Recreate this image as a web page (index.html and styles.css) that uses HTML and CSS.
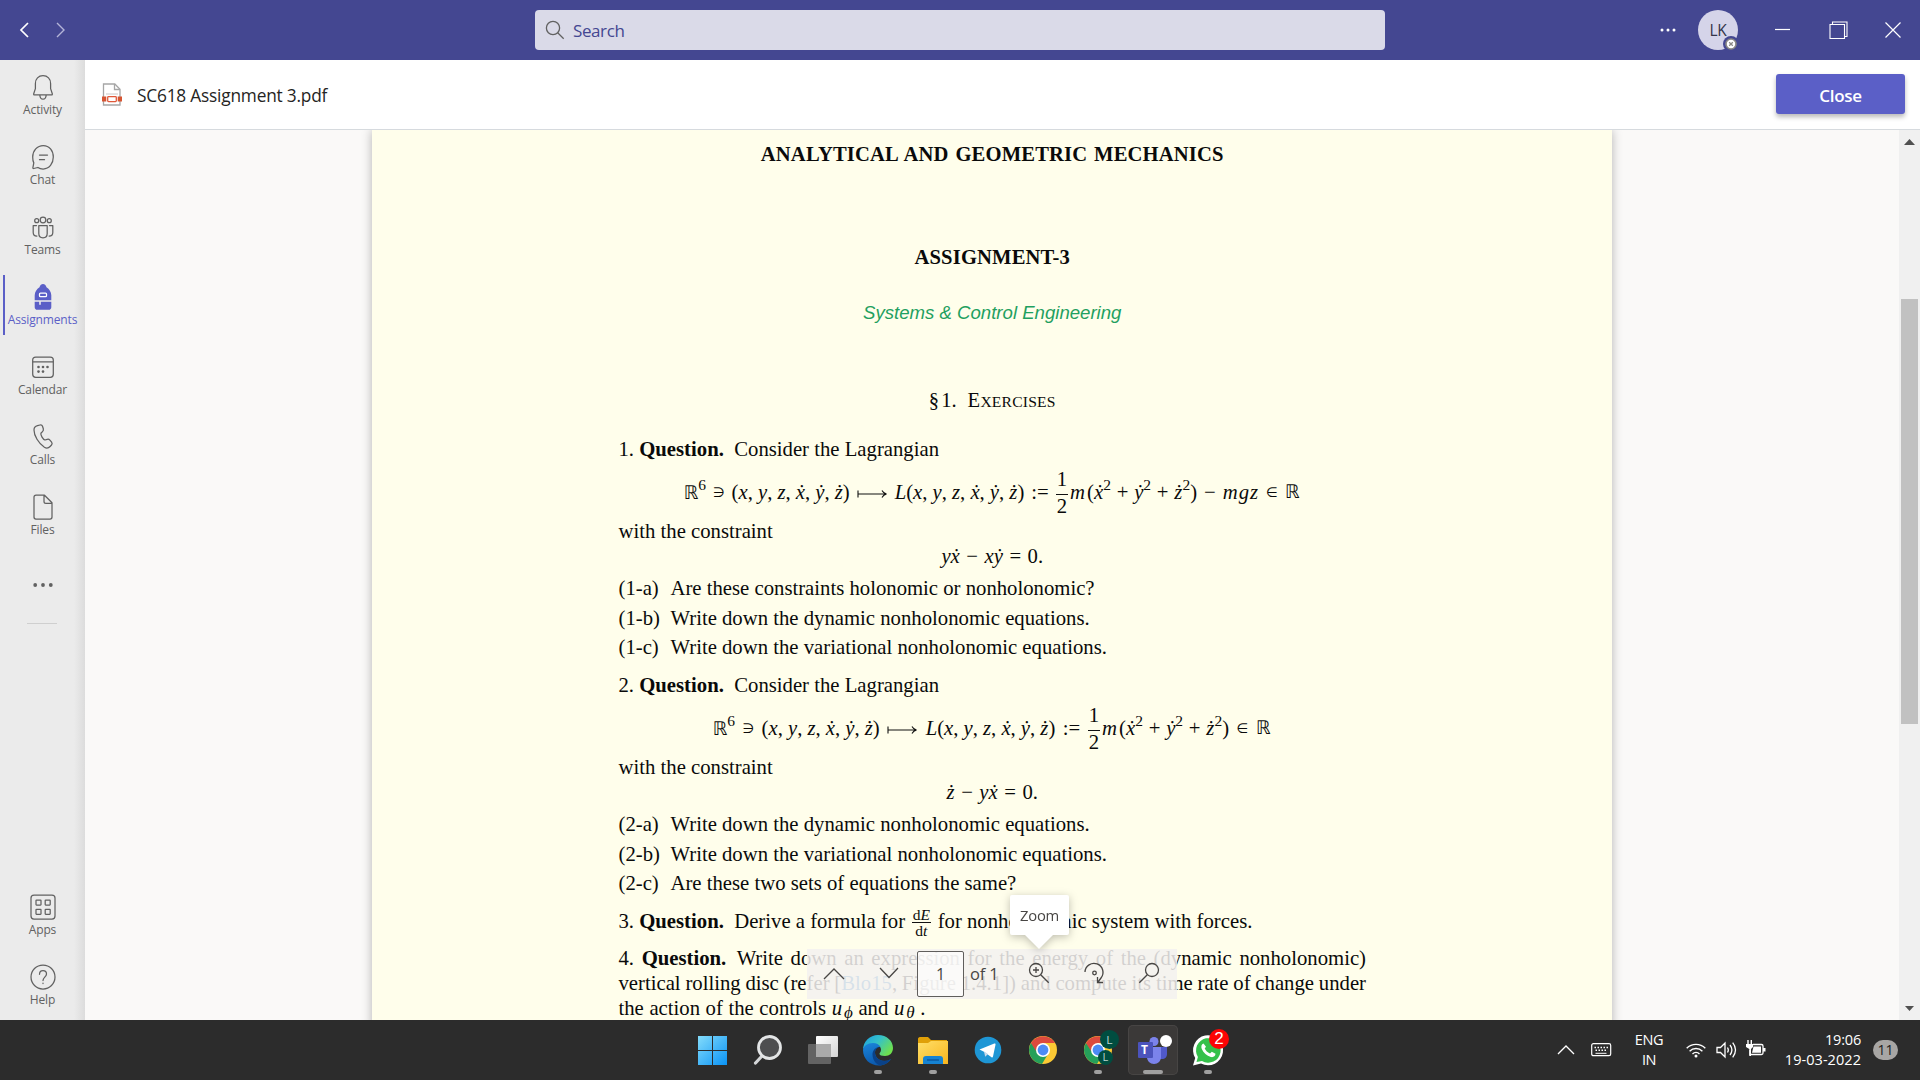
FILE: index.html
```html
<!DOCTYPE html>
<html lang="en">
<head>
<meta charset="utf-8">
<title>SC618 Assignment 3.pdf</title>
<link rel="stylesheet" href="styles.css">
</head>
<body>
<div class="desktop">
  <header class="titlebar">
    <div class="history">
      <svg width="12" height="18" viewBox="0 0 12 18"><path d="M10 2 3 9l7 7" fill="none" stroke="#fff" stroke-width="1.7"/></svg>
      <svg width="12" height="18" viewBox="0 0 12 18"><path d="m2 2 7 7-7 7" fill="none" stroke="#b4b5d8" stroke-width="1.4"/></svg>
    </div>
    <div class="searchbox">
      <svg width="20" height="20" viewBox="0 0 20 20" fill="none" stroke="#616161" stroke-width="1.3"><circle cx="8" cy="8" r="6.6"/><path d="m12.7 12.7 6 6"/></svg>
      <span>Search</span>
    </div>
    <div class="window-tools">
      <svg class="dots" width="18" height="4" viewBox="0 0 18 4" fill="#fff"><circle cx="3" cy="2" r="1.5"/><circle cx="9" cy="2" r="1.5"/><circle cx="15" cy="2" r="1.5"/></svg>
      <div class="avatar">LK
        <svg class="presence" width="16" height="16" viewBox="0 0 16 16"><circle cx="8" cy="8" r="8" fill="#444791"/><circle cx="8" cy="8" r="5" fill="#fff" stroke="#8a8886" stroke-width="1.6"/><path d="m6.2 6.2 3.6 3.6m0-3.6-3.6 3.6" stroke="#8a8886" stroke-width="1.3"/></svg>
      </div>
      <svg class="minimize" width="16" height="18" viewBox="0 0 16 18"><path d="M0 8.5h15" stroke="#fff" stroke-width="1.2"/></svg>
      <svg class="restore" width="19" height="19" viewBox="0 0 19 19" fill="none" stroke="#fff" stroke-width="1.1"><path d="M1 3.5h14.5v14H1zM3.5 3.5V1H18v14.500h-2.500"/></svg>
      <svg class="quit" width="16" height="16" viewBox="0 0 16 16"><path d="m.5.5 15 15m0-15-15 15" stroke="#fff" stroke-width="1.2"/></svg>
    </div>
  </header>

  <div class="app">
    <nav class="rail">
      <a class="item"><svg viewBox="0 0 28 28"><path d="M14 2.700c-4.600 0-7.600 3.300-7.600 7.700v5.200l-1.700 5.200c-.2.600.1 1 .7 1h17.200c.6 0 .9-.4.700-1l-1.700-5.200v-5.200c0-4.400-3-7.700-7.600-7.700zM10.800 22c.2 3 1.500 4.200 3.200 4.200s3-1.200 3.200-4.200"/></svg>Activity</a>
      <a class="item"><svg viewBox="0 0 28 28"><path d="M14.300 2.500c6 0 10 5 10 11.500s-4 12-10.200 12c-2 0-3.700-.5-5.200-1.500l-4.200 1c-.6.1-.9-.2-.8-.8l.9-4.800C3.900 18.200 3.700 16.200 3.700 14c0-6.500 4.500-11.500 10.600-11.500zM10.500 12h8M10.500 16.700h5"/></svg>Chat</a>
      <a class="item"><svg viewBox="0 0 28 28"><circle cx="14" cy="7" r="2.800"/><circle cx="7.700" cy="7.700" r="2"/><circle cx="20.300" cy="7.700" r="2"/><path d="M9.800 12.500h8.400v8c0 2.600-1.700 4.300-4.200 4.300s-4.200-1.700-4.200-4.300zM7.500 12.500H4.200v7c0 2.300 1.300 3.600 3.700 3.600M20.500 12.500h3.300v7c0 2.300-1.300 3.600-3.700 3.600"/></svg>Teams</a>
      <a class="item active"><svg viewBox="0 0 28 28"><path class="solid" d="M14 1c1.500 0 2.800 1.200 3.500 3.200 2.900 1.800 4.600 4.600 4.800 8v5H5.700v-5c.2-3.400 1.900-6.200 4.800-8C11.200 2.200 12.500 1 14 1zM5.700 18.800h4.500v3h1.600v-3h10.500v5.400c0 1.500-1 2.600-2.500 2.600H8.200c-1.500 0-2.500-1.100-2.500-2.600z"/><rect x="10.500" y="10" width="7" height="3.700" rx="1" stroke="#fff"/></svg>Assignments</a>
      <a class="item"><svg viewBox="0 0 28 28"><rect x="3.700" y="4" width="20.600" height="20.300" rx="3"/><path d="M4 8.800h20"/><g class="solid"><circle cx="9.500" cy="14" r="1.300"/><circle cx="14" cy="14" r="1.300"/><circle cx="18.500" cy="14" r="1.300"/><circle cx="9.500" cy="18.600" r="1.300"/><circle cx="14" cy="18.600" r="1.300"/></g></svg>Calendar</a>
      <a class="item"><svg viewBox="0 0 28 28"><path d="M8.500 2.700 11 2c1.200-.3 2.100.2 2.500 1.300l.8 2.500c.3 1.200 0 2-.8 2.800l-1.600 1.700c-.5 1.700 2.200 6.300 4 6.700l2.300-.7c1-.3 2 0 2.700.8l1.700 2.100c.7 1 .7 2-.1 2.800l-1.400 1.500c-1.600 1.700-3.700 2-5.700.8C9.500 20.300 5 12.700 5 6.900c0-2 1.400-3.600 3.500-4.200z"/></svg>Calls</a>
      <a class="item"><svg viewBox="0 0 28 28"><path d="M7 2.200h8.500L23 9.700V24c0 1.300-.7 2-2 2H7c-1.300 0-2-.7-2-2V4.200c0-1.300.7-2 2-2zM15 2.500v6c0 1.300.6 1.900 1.900 1.900H23"/></svg>Files</a>
      <a class="item more"><svg viewBox="0 0 28 28"><g class="solid"><circle cx="6.200" cy="14" r="1.900"/><circle cx="14" cy="14" r="1.900"/><circle cx="21.800" cy="14" r="1.900"/></g></svg></a>
      <div class="rule"></div>
      <a class="item apps"><svg viewBox="0 0 28 28"><rect x="2" y="2" width="24" height="24" rx="3"/><rect x="7" y="7" width="5" height="5" rx=".5"/><rect x="16.200" y="7" width="5" height="5" rx=".5"/><rect x="7" y="16.300" width="5" height="5" rx=".5"/><rect x="16.200" y="16.300" width="5" height="5" rx=".5"/></svg>Apps</a>
      <a class="item"><svg viewBox="0 0 28 28"><circle cx="14" cy="14" r="12"/><path d="M10.500 11.300c0-2.300 1.300-3.800 3.500-3.800s3.500 1.400 3.500 3.400c0 3-3.500 3.500-3.500 6.600M14 20v.6"/></svg>Help</a>
    </nav>

    <main class="viewer">
      <div class="filebar">
        <svg class="pdf" width="20" height="23" viewBox="0 0 20 23"><path d="M1.500 1h11.300L18 6.200V22H1.500z" fill="#fff" stroke="#a6a6a6" stroke-width="1.300"/><path d="M12.500 1v5.500H18" fill="none" stroke="#a6a6a6" stroke-width="1.300"/><path d="M4 11h12" stroke="#c8c8c8"/><path d="M0 13.500h20v5H0z" fill="#d65532"/><rect x="4.300" y="12.500" width="11.400" height="7" fill="#fff"/><rect x="5.700" y="13.600" width="8.600" height="5" rx=".8" fill="#fff" stroke="#e0593a" stroke-width="1.300"/></svg>
        <span class="filename">SC618 Assignment 3.pdf</span>
        <button class="close">Close</button>
      </div>
      <div class="stage">
        <article class="paper">
          <h1 class="line course">ANALYTICAL AND GEOMETRIC MECHANICS</h1>
          <h2 class="line number">ASSIGNMENT-3</h2>
          <p class="line dept">Systems &amp; Control Engineering</p>
          <h3 class="line section">§<span>1.</span><span class="caps">E<small>XERCISES</small></span></h3>

          <p class="line q1">1. <b>Question.</b>&ensp;Consider the Lagrangian</p>
          <div class="line formula f1">
            <span><span class="bb">ℝ</span><sup>6</sup></span><span class="rel">∋</span><span class="tuple">(<i>x</i>, <i>y</i>, <i>z</i>, <i>ẋ</i>, <i>ẏ</i>, <i>ż</i>)</span>
            <svg class="maps" width="31" height="10" viewBox="0 0 31 10"><path d="M1 1.500v7M1 5h28M25 1.500c1 2 2.300 3 4.500 3.500-2.200.5-3.500 1.500-4.500 3.500" fill="none" stroke="#111" stroke-width="1.100"/></svg>
            <span class="tuple"><i>L</i>(<i>x</i>, <i>y</i>, <i>z</i>, <i>ẋ</i>, <i>ẏ</i>, <i>ż</i>)</span><span class="def">:=</span>
            <span class="half"><span class="frac"><span>1</span><span>2</span></span><span class="kinetic"><i class="mass">m</i>(<i>ẋ</i><sup>2</sup> + <i>ẏ</i><sup>2</sup> + <i>ż</i><sup>2</sup>)</span></span><span>−</span><span class="mgz">mgz</span><span class="rel">∈</span><span class="bb">ℝ</span>
          </div>
          <p class="line with1">with the constraint</p>
          <div class="line eq e1"><i>yẋ</i><span>−</span><i>xẏ</i><span>=</span>0.</div>
          <p class="line item-1a"><span class="tag">(1-a)</span>Are these constraints holonomic or nonholonomic?</p>
          <p class="line item-1b"><span class="tag">(1-b)</span>Write down the dynamic nonholonomic equations.</p>
          <p class="line item-1c"><span class="tag">(1-c)</span>Write down the variational nonholonomic equations.</p>

          <p class="line q2">2. <b>Question.</b>&ensp;Consider the Lagrangian</p>
          <div class="line formula f2">
            <span><span class="bb">ℝ</span><sup>6</sup></span><span class="rel">∋</span><span class="tuple">(<i>x</i>, <i>y</i>, <i>z</i>, <i>ẋ</i>, <i>ẏ</i>, <i>ż</i>)</span>
            <svg class="maps" width="31" height="10" viewBox="0 0 31 10"><path d="M1 1.500v7M1 5h28M25 1.500c1 2 2.300 3 4.500 3.500-2.200.5-3.500 1.500-4.500 3.500" fill="none" stroke="#111" stroke-width="1.100"/></svg>
            <span class="tuple"><i>L</i>(<i>x</i>, <i>y</i>, <i>z</i>, <i>ẋ</i>, <i>ẏ</i>, <i>ż</i>)</span><span class="def">:=</span>
            <span class="half"><span class="frac"><span>1</span><span>2</span></span><span class="kinetic"><i class="mass">m</i>(<i>ẋ</i><sup>2</sup> + <i>ẏ</i><sup>2</sup> + <i>ż</i><sup>2</sup>)</span></span><span class="rel">∈</span><span class="bb">ℝ</span>
          </div>
          <p class="line with2">with the constraint</p>
          <div class="line eq e2"><i>ż</i><span>−</span><i>yẋ</i><span>=</span>0.</div>
          <p class="line item-2a"><span class="tag">(2-a)</span>Write down the dynamic nonholonomic equations.</p>
          <p class="line item-2b"><span class="tag">(2-b)</span>Write down the variational nonholonomic equations.</p>
          <p class="line item-2c"><span class="tag">(2-c)</span>Are these two sets of equations the same?</p>

          <p class="line q3">3. <b>Question.</b>&ensp;Derive a formula for <span class="frac small"><span>d<i>E</i></span><span>d<i>t</i></span></span> for nonholonomic system with forces.</p>
          <p class="line q4 full">4. <b>Question.</b>&ensp;Write down an expression for the energy of the (dynamic nonholonomic)</p>
          <p class="line q4b full">vertical rolling disc (refer [<span class="cite">Blo15</span>, Figure 1.4.1]) and compute its time rate of change under</p>
          <p class="line q4c">the action of the controls <i>u<sub>ϕ</sub></i> and <i>u<sub>θ</sub></i> .</p>
        </article>

        <div class="scrollbar">
          <svg width="11" height="6" viewBox="0 0 11 6"><path d="M5.500 0 11 6H0z" fill="#505050"/></svg>
          <div class="thumb"></div>
          <svg width="9" height="5" viewBox="0 0 9 5"><path d="M0 0h9L4.500 5z" fill="#505050"/></svg>
        </div>

        <div class="tooltip">Zoom</div>
        <div class="pager">
          <svg class="up" width="22" height="13" viewBox="0 0 22 13"><path d="m1 12 10-10 10 10"/></svg>
          <svg class="down" width="20" height="13" viewBox="0 0 20 13"><path d="m1 1 9 9.500L19 1"/></svg>
          <span class="pageno">1</span>
          <span class="of">of 1</span>
          <svg class="zoomin" width="22" height="22" viewBox="0 0 22 22"><circle cx="8" cy="8" r="6.500"/><path d="m12.700 12.700 8 8M8 5v6M5 8h6"/></svg>
          <svg class="rotate" width="24" height="24" viewBox="0 0 24 24"><path d="M2 11a9 9 0 1 1 16 6l-3 4M14.500 16v5.500H20"/><circle cx="11.500" cy="12" r="1.800"/></svg>
          <svg class="find" width="22" height="22" viewBox="0 0 22 22"><circle cx="14" cy="8" r="6.500"/><path d="m9.300 12.700-8 8"/></svg>
        </div>
      </div>
    </main>
  </div>

  <footer class="taskbar">
    <div class="pins">
      <div class="pin"><svg viewBox="0 0 32 32"><defs><linearGradient id="win" x1="0" y1="0" x2="1" y2="1"><stop offset="0" stop-color="#84dcfb"/><stop offset="1" stop-color="#0a93f5"/></linearGradient></defs><path fill="url(#win)" d="M1 2h14v14H1zM16 2h14v14H16zM1 17h14v14H1zM16 17h14v14H16z"/></svg></div>
      <div class="pin"><svg viewBox="0 0 32 32"><path d="m10.500 21.500-7 7.500" stroke="#d4d6d8" stroke-width="3.200" stroke-linecap="round"/><circle cx="17.500" cy="13.500" r="11" fill="#4d4e50" stroke="#e3e5e6" stroke-width="2.800"/></svg></div>
      <div class="pin"><svg viewBox="0 0 32 32"><defs><linearGradient id="tv" x1="0" y1="0" x2="1" y2="1"><stop offset="0" stop-color="#fff"/><stop offset="1" stop-color="#d4d4d4"/></linearGradient></defs><rect x="9" y="2" width="22" height="21" rx="1" fill="url(#tv)"/><rect x="1" y="10" width="23" height="20" rx="1" fill="#6b6b6b" opacity=".88"/><path d="M9 10h15v13H9z" fill="#aaa"/></svg></div>
      <div class="pin run"><svg viewBox="0 0 32 32"><defs><linearGradient id="eg" x1="0" y1="0" x2="1" y2=".6"><stop offset="0" stop-color="#1b9de2"/><stop offset=".5" stop-color="#35c1c9"/><stop offset="1" stop-color="#6ee04e"/></linearGradient><linearGradient id="eb" x1="0" y1="0" x2=".4" y2="1"><stop offset="0" stop-color="#1b86dc"/><stop offset="1" stop-color="#0b58ac"/></linearGradient></defs><path fill="url(#eg)" d="M1 16C1 7.500 8 1 16 1c9 0 15 6 15 13 0 5-3.500 8-8 8-3.500 0-5.500-1-5.500-2.300 0-1 1.500-1.600 1.500-4 0-3-3-5.700-7.500-5.700C6 10 1.500 13 1 16z"/><path fill="url(#eb)" d="M1 16c.5-4 4.500-7 10-7 3.500 0 6 1.500 7.500 4-3-.5-5.500 2-5.500 5.500 0 4.500 4 8.500 9.500 8.500 2.500 0 5-.8 6.500-2-2.500 4-7 6.500-12 6.500C8 31.500 1 25 1 16z"/><path fill="#0a4289" d="M18.500 13c-4-.5-8 2.500-8 7.500s3 9.500 7.500 11c4.500-.5 8.500-2.700 11-6.500-8 4.500-16 0-16-6.500 0-3 2.500-5.500 5.500-5.500z"/></svg></div>
      <div class="pin run"><svg viewBox="0 0 32 32"><defs><linearGradient id="fo" x1="0" y1="0" x2="1" y2="1"><stop offset="0" stop-color="#ffdf68"/><stop offset="1" stop-color="#f8b51e"/></linearGradient></defs><path d="M1 5c0-1 .7-2 2-2h8l3 3h16v8H1z" fill="#e0a008"/><path d="M1 9h10l3-2h17v23H1z" fill="url(#fo)"/><path d="M6 30v-5c0-2 1-3 3-3h14c2 0 3 1 3 3v5z" fill="#1683d2"/><path d="M10 26h12" stroke="#0a529a" stroke-width="1.300"/></svg></div>
      <div class="pin"><svg viewBox="0 0 32 32"><circle cx="16" cy="16" r="13.300" fill="#1e96d5"/><path d="m7.500 15.500 14.800-6c.8-.3 1.400.2 1.200 1.200l-2.500 11.800c-.2.900-.8 1.100-1.500.7L12 17.700z" fill="#fff"/><path d="m12 17.500 1.200 5.200 2.800-2.700" fill="#c8daea"/></svg></div>
      <div class="pin"><svg viewBox="0 0 32 32"><circle cx="16" cy="16" r="14" fill="#fbc934"/><path d="M16 16 3.900 9A14 14 0 0 0 15 30l6-10z" fill="#25a05a"/><path d="M16 9h12.100A14 14 0 0 0 4 9l5 8z" fill="#dc4a3e"/><circle cx="16" cy="16" r="7" fill="#fff"/><circle cx="16" cy="16" r="5.400" fill="#4c8bf5"/></svg></div>
      <div class="pin run"><svg viewBox="0 0 32 32"><circle cx="16" cy="16" r="14" fill="#fbc934"/><path d="M16 16 3.900 9A14 14 0 0 0 15 30l6-10z" fill="#25a05a"/><path d="M16 9h12.100A14 14 0 0 0 4 9l5 8z" fill="#dc4a3e"/><circle cx="16" cy="16" r="7" fill="#fff"/><circle cx="16" cy="16" r="5.400" fill="#4c8bf5"/></svg><span class="profile big">L</span><span class="profile little">L</span></div>
      <div class="pin run current"><svg viewBox="0 0 32 32"><circle cx="17" cy="7.500" r="4.500" fill="#7b83eb"/><path d="M21 13h9v7c0 3-2 5-5 5h-4z" fill="#5059c9"/><path d="M10 13h14v10c0 4-3 7-7 7s-7-3-7-7z" fill="#7b83eb"/><rect x="1" y="8" width="15" height="16" rx="1" fill="#4b53bc"/><circle cx="29" cy="7" r="6" fill="#fff"/></svg><span class="tee">T</span></div>
      <div class="pin run"><svg viewBox="0 0 32 32"><path d="M1 31.500 3.200 24A15 15 0 1 1 9 29.500z" fill="#fff"/><path d="m4.500 28 1.400-5A12.300 12.300 0 1 1 10 27z" fill="#35c14b"/><path d="M11.500 9.500c-2 .8-2.700 3-1.700 5.500 1.700 4 5 6.800 9 8 2.500.6 4.500-.7 4.700-3.200l-3.700-2-1.800 1.800c-2.500-1-4.200-2.700-5.300-5l1.300-1.800z" fill="#fff"/></svg><span class="unread">2</span></div>
    </div>
    <div class="tray">
      <svg class="expand" width="18" height="10" viewBox="0 0 18 10"><path d="m1 9 8-8 8 8" fill="none" stroke="#fff" stroke-width="1.300"/></svg>
      <svg class="keys" width="21" height="14" viewBox="0 0 21 14"><rect x=".7" y=".7" width="19" height="12" rx="1.700" fill="none" stroke="#fff" stroke-width="1.200"/><path d="M3.500 4.500h14M4.500 7.300h12" stroke="#fff" stroke-width="1.500" stroke-dasharray="1.500 1.500"/><path d="M4.500 10.300h11" stroke="#fff"/></svg>
      <div class="lang"><span>ENG</span><span>IN</span></div>
      <svg class="wifi" width="20" height="16" viewBox="0 0 20 16" fill="none" stroke="#fff" stroke-width="1.400"><path d="M.7 6.300a13 13 0 0 1 18.600 0M3.600 9.200a9 9 0 0 1 12.800 0M6.500 12a5 5 0 0 1 7 0"/><circle cx="10" cy="14" r="1.500" fill="#fff" stroke="none"/></svg>
      <svg class="sound" width="21" height="18" viewBox="0 0 21 18" fill="none" stroke="#fff" stroke-width="1.300"><path d="M1 6.500h3.500L9 2v14l-4.500-4.500H1zM11.500 6.500c1 1.500 1 3.500 0 5M14 4c2.300 3 2.300 7 0 10M16.700 1.700c3.500 4.500 3.500 10 0 14.600"/></svg>
      <svg class="battery" width="20" height="17" viewBox="0 0 20 17"><path d="M7 4.500h8.500c1 0 1.500.5 1.500 1.500v7c0 1-.5 1.500-1.500 1.500H4V10" fill="none" stroke="#fff" stroke-width="1.300"/><path d="M7.500 6.500H15v6.200H6zM17 8h2.500v3.500H17zM0 4h7v3L5 9v7H3.300V9L0 7zM1.300 0h1.400v4H1.300zM4.600 0H6v4H4.600z" fill="#fff"/></svg>
      <div class="clock"><span>19:06</span><span class="date">19-03-2022</span></div>
      <span class="count">11</span>
    </div>
  </footer>
</div>
</body>
</html>
```
FILE: styles.css
```css
* { box-sizing: border-box; }
body { margin: 0; font-family: "Open Sans", "Noto Sans", sans-serif; }
h1, h2, h3, p { margin: 0; font-weight: 400; }
svg { display: block; flex: none; overflow: visible; }

.desktop { width: 1920px; height: 1080px; display: flex; flex-direction: column; overflow: hidden; }

/* title bar */
.titlebar { height: 60px; background: #444791; display: flex; align-items: center; flex: none; }
.history { width: 535px; display: flex; gap: 25px; padding-left: 18px; }
.searchbox { width: 850px; height: 40px; border-radius: 4px; background: #dadae8; display: flex; align-items: center; gap: 8px; padding-left: 10px; color: #444791; font-size: 17px; letter-spacing: -.4px; }
.window-tools { flex: 1; display: flex; align-items: center; padding-left: 274px; }
.avatar { position: relative; width: 40px; height: 40px; margin-left: 21px; border-radius: 50%; background: #d5d4e9; color: #33344a; font-size: 15.500px; font-weight: 500; line-height: 40px; text-align: center; letter-spacing: -.3px; }
.presence { position: absolute; right: -1px; bottom: -2px; }
.minimize { margin-left: 37px; }
.restore { margin-left: 38px; }
.quit { margin-left: 37px; }

/* app rail */
.app { flex: 1; display: flex; min-height: 0; }
.rail { width: 85px; flex: none; display: flex; flex-direction: column; background: linear-gradient(90deg, #ebebeb 74px, #dcdcdc 85px); }
.item { height: 70px; flex: none; display: flex; flex-direction: column; align-items: center; padding-top: 13px; font-size: 12px; line-height: 17px; letter-spacing: -.15px; color: #616161; }
.item svg { width: 28px; height: 28px; margin-left: 1px; fill: none; stroke: #616161; stroke-width: 1.25; stroke-linecap: round; stroke-linejoin: round; }
.item .solid { fill: #616161; stroke: none; }
.item.active { color: #5b5fc7; background: linear-gradient(#5b5fc7, #5b5fc7) 3px 5px / 2px 60px no-repeat; }
.item.active .solid { fill: #5b5fc7; }
.item.more { padding-top: 21px; }
.rule { width: 30px; height: 1px; margin: 3px 0 0 27px; background: #cfcfcf; }
.item.apps { margin-top: auto; }

/* file header */
.viewer { flex: 1; display: flex; flex-direction: column; min-width: 0; }
.filebar { height: 70px; flex: none; display: flex; align-items: center; background: #fff; border-bottom: 1px solid #d6dade; padding: 0 15px 0 17px; }
.filename { flex: 1; margin: 2px 0 0 15px; font-size: 17.300px; letter-spacing: -.2px; color: #252423; font-weight: 500; }
.close { width: 129px; height: 40px; margin-bottom: 1px; border: 0; border-radius: 3px; background: #5b5fc7; color: #fff; font: 600 17px "Open Sans", sans-serif; letter-spacing: -.3px; padding-top: 3px; box-shadow: 0 3px 5px rgba(0,0,0,.28); }

/* document stage */
.stage { flex: 1; min-height: 0; display: flex; justify-content: space-between; position: relative; overflow: hidden; background: #faf9f8; padding-left: 287px; }
.paper { width: 1240px; height: 900px; background: #fffeeb; box-shadow: 0 0 10px rgba(0,0,0,.28); padding: 12px 246px 0 246.500px; color: #0a0a0a; font-family: "Liberation Serif", serif; font-size: 20.720px; }
.line { line-height: 24px; white-space: nowrap; }
.course { height: 103px; font-size: 20.600px; font-weight: 700; text-align: center; letter-spacing: .160px; word-spacing: 1.500px; font-kerning: normal; }
.number { height: 56px; font-size: 20.600px; font-weight: 700; text-align: center; letter-spacing: .15px; }
.dept { height: 87px; text-align: center; font: italic 18.600px/24px "Liberation Sans", sans-serif; color: #1fa060; }
.section { height: 49px; display: flex; justify-content: center; gap: 2px; font-size: 20.600px; }
.caps { margin-left: 9px; letter-spacing: .2px; }
.caps small { font-size: 15.600px; }
.q1 { height: 43px; }
.f1 { height: 39px; width: 616px; margin-left: 65px; }
.with1 { height: 25px; }
.e1 { height: 32px; }
.item-1a { height: 30px; }
.item-1b { height: 29px; }
.item-1c { height: 38px; }
.q2 { height: 43px; }
.f2 { height: 39px; width: 558px; margin-left: 94px; }
.with2 { height: 25px; }
.e2 { height: 32px; }
.item-2a { height: 30px; }
.item-2b { height: 29px; }
.item-2c { height: 38px; }
.q3 { height: 37px; }
.q4, .q4b { height: 25px; }
.q4c { word-spacing: .400px; }
.full { text-align: justify; text-align-last: justify; word-spacing: -1.500px; }
.cite { color: #2a7fc0; }
.tag { display: inline-block; width: 52px; }
.formula { display: flex; justify-content: space-between; }
.tuple { word-spacing: -.1px; }
.bb { font-family: "DejaVu Sans", sans-serif; font-size: 18.500px; }
.rel { font-family: "DejaVu Sans", sans-serif; font-size: 13.500px; }
.maps { margin-top: 9px; }
.mgz { font-style: italic; letter-spacing: 1px; }
sup { font-size: 15.500px; line-height: 0; vertical-align: 9px; }
sub { font-size: 17px; line-height: 0; vertical-align: -3px; margin-left: 2px; }
.half { display: flex; }
.kinetic { word-spacing: .600px; }
.mass { margin-right: 2px; }
.frac { display: flex; flex-direction: column; align-items: center; line-height: 27px; margin: -14px 2px 0 0; height: 54px; background: linear-gradient(#111, #111) 0 28px / 100% 1px no-repeat; padding: 0 1px; }
.frac.small { display: inline-flex; vertical-align: middle; font-size: 15.500px; line-height: 16px; height: 32px; margin: -10px 1.500px -9px; background-position: 0 15px; }
.eq { display: flex; justify-content: center; gap: 6.500px; }

/* scrollbar */
.scrollbar { width: 21px; background: #f0f0f0; display: flex; flex-direction: column; align-items: center; padding: 9px 0 9px; }
.thumb { width: 17px; height: 425px; background: #c1c1c1; margin: 154px 0 auto; }

/* floating pager */
.pager { position: absolute; left: 722px; top: 819px; width: 370px; height: 50px; display: flex; align-items: center; background: rgba(243,241,240,.86); color: #484644; }
.pager svg { fill: none; stroke: #484644; stroke-width: 1.300; margin-bottom: 2px; }
.pager .up { margin-left: 16px; }
.pager .down { margin-left: 34px; }
.pageno { width: 47px; height: 46px; margin-left: 18px; border: 1px solid #605e5c; border-radius: 2px; background: rgba(255,255,255,.6); text-align: center; font-size: 16px; line-height: 44px; }
.of { width: 65px; padding-left: 6px; font-size: 16.500px; letter-spacing: -.2px; margin-bottom: 1px; }
.zoomin { margin-left: -1px; }
.pager .rotate { margin-left: 33px; }
.pager .find { margin-left: 31px; }
.tooltip { position: absolute; left: 925px; top: 765px; width: 59px; height: 40px; border-radius: 2px; background: #fff; color: #484644; font-size: 14.800px; letter-spacing: -.3px; line-height: 41px; text-align: center; filter: drop-shadow(0 2px 4px rgba(0,0,0,.25)); z-index: 1; }
.tooltip::after { content: ""; position: absolute; left: 15px; top: 40px; border: 14px solid transparent; border-top-color: #fff; border-bottom: 0; }

/* taskbar */
.taskbar { height: 60px; flex: none; display: flex; justify-content: space-between; background: #2c2c2c; color: #fff; }
.pins { display: flex; padding: 5px 0 5px 688px; gap: 5px; }
.pin { position: relative; width: 50px; height: 50px; border-radius: 5px; display: flex; justify-content: center; padding-top: 9px; }
.pin svg { width: 32px; height: 32px; }
.run::after { content: ""; position: absolute; left: 21px; top: 45px; width: 8px; height: 4px; border-radius: 2px; background: #a0a0a0; }
.current { background: #3b3938; box-shadow: inset 0 0 0 1px #474544; }
.current::after { left: 15px; width: 20px; }
.profile { position: absolute; border-radius: 50%; background: #004d40; color: #b9d3cf; text-align: center; font-family: "Liberation Sans", sans-serif; }
.big { width: 19px; height: 19px; left: 27px; top: 5px; font-size: 11px; line-height: 20px; }
.little { width: 15px; height: 15px; left: 25px; top: 25px; font-size: 10px; line-height: 15px; }
.tee { position: absolute; left: 13px; top: 15px; font-size: 12px; font-weight: 700; line-height: 20px; }
.unread { position: absolute; left: 26px; top: 4px; width: 20px; height: 20px; border-radius: 50%; background: #fb0505; font: 17px/20px "Liberation Sans", sans-serif; text-align: center; }
.tray { display: flex; align-items: center; padding-right: 22px; font-size: 14.500px; line-height: 20px; }
.expand { margin-bottom: 1px; }
.keys { margin-left: 16px; }
.lang { display: flex; flex-direction: column; align-items: center; margin-left: 22px; width: 30px; letter-spacing: -.4px; }
.wifi { margin-left: 22px; margin-bottom: 1px; }
.sound { margin-left: 10px; }
.battery { margin-left: 9px; margin-bottom: 3px; }
.clock { display: flex; flex-direction: column; align-items: flex-end; width: 78px; margin-left: 17px; letter-spacing: -.2px; }
.date { letter-spacing: .05px; }
.count { width: 25px; height: 20px; margin-left: 12px; border-radius: 10px; background: #a8a6a4; color: #1c1c1c; font-size: 14px; text-align: center; }
```
